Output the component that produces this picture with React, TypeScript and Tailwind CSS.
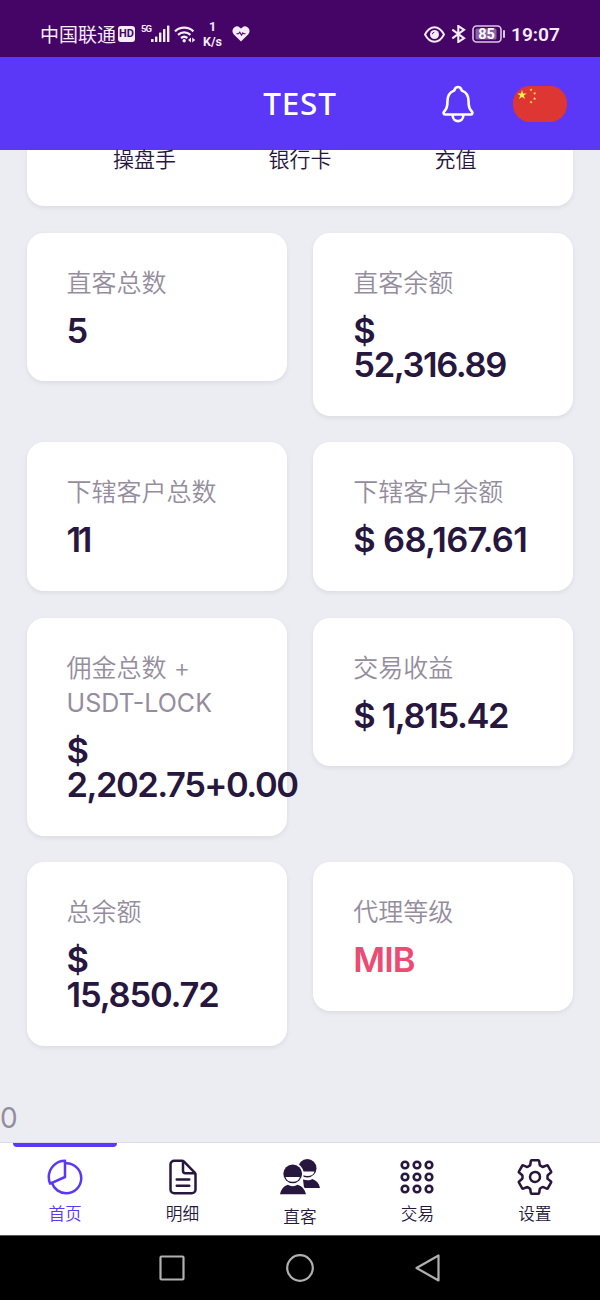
import type { ReactNode } from "react";
import {
  IoDocumentTextOutline,
  IoNotificationsOutline,
  IoPieChartOutline,
  IoSettingsOutline,
} from "react-icons/io5";
import { clsx } from "clsx";

type Stat = {
  label: string;
  latin?: string;
  value: string;
  tracking: string;
  accent?: boolean;
};

const stats: Stat[] = [
  { label: "直客总数", value: "5", tracking: "tracking-normal" },
  { label: "直客余额", value: "$\n52,316.89", tracking: "tracking-[-1.4px]" },
  { label: "下辖客户总数", value: "11", tracking: "tracking-[-3.5px]" },
  { label: "下辖客户余额", value: "$ 68,167.61", tracking: "tracking-[-0.7px]" },
  {
    label: "佣金总数 +",
    latin: "USDT-LOCK",
    value: "$\n2,202.75+0.00",
    tracking: "tracking-[-1.5px]",
  },
  { label: "交易收益", value: "$ 1,815.42", tracking: "tracking-[-1.4px]" },
  { label: "总余额", value: "$\n15,850.72", tracking: "tracking-[-1.2px]" },
  { label: "代理等级", value: "MIB", tracking: "tracking-[-1px]", accent: true },
];

function StatCard({ label, latin, value, tracking, accent }: Stat) {
  return (
    <div className="rounded-[17px] bg-white pt-[33px] pr-[26px] pb-[32.8px] pl-[40px] shadow-[0_2px_5px_rgba(0,0,0,0.07)]">
      <div className="text-[25px] leading-[35px] text-[#958d9e]">
        <p className="font-[350] whitespace-nowrap">{label}</p>
        {latin && <p>{latin}</p>}
      </div>
      <p
        className={clsx(
          "mt-[13px] text-[34.5px] leading-[34.7px] font-semibold whitespace-pre",
          tracking,
          accent ? "text-[#ec4b73]" : "text-[#27173e]",
        )}
      >
        {value}
      </p>
    </div>
  );
}

function StatusBar() {
  return (
    <div className="flex h-[57px] shrink-0 items-center bg-[#450567] pt-[11px] pr-[40px] pl-[40px] text-[#f4ecf7]">
      <span className="pt-[2px] text-[19px] leading-none">中国联通</span>
      <span className="ml-[2px] flex h-[16px] w-[17px] items-center justify-center rounded-[3px] bg-[#f4ecf7] font-[Roboto] text-[11px] font-bold text-[#450567]">
        HD
      </span>
      <span className="mb-[10px] ml-[6px] w-[10px] font-[Roboto] text-[9.5px] leading-none font-bold tracking-[-1px]">
        5G
      </span>
      <svg width="19" height="18" viewBox="0 0 19 18" className="fill-current">
        <rect x="0" y="14" width="2.6" height="3" rx="0.6" />
        <rect x="4" y="11.5" width="2.4" height="5.5" rx="0.6" />
        <rect x="8" y="7.5" width="2.4" height="9.5" rx="0.6" />
        <rect x="12" y="4" width="2.4" height="13" rx="0.6" />
        <rect x="16" y="0.5" width="2.4" height="16.5" rx="0.6" />
      </svg>
      <svg width="22" height="18" viewBox="0 0 22 18" className="ml-[4px]" fill="none" stroke="currentColor" strokeWidth="2.3">
        <path d="M1 6.3a13.5 13.5 0 0 1 18.4 0" />
        <path d="M4 9.8a9.4 9.4 0 0 1 12.4 0" />
        <path d="M7 13a5.2 5.2 0 0 1 6.4 0" />
        <circle cx="10.2" cy="15.8" r="1.7" fill="currentColor" stroke="none" />
        <path d="M17 12.5v5l-3-2.5zM18.2 12.5v5l3-2.5z" fill="currentColor" stroke="none" />
      </svg>
      <div className="ml-[5px] flex w-[23px] flex-col items-center font-[Roboto] text-[12.5px] leading-[15px] font-bold">
        <span>1</span>
        <span>K/s</span>
      </div>
      <svg width="18" height="16" viewBox="0 0 18 16" className="ml-[8px]">
        <path
          d="M9 15.5 1.9 8.4A4.6 4.6 0 0 1 1.6 2 4.7 4.7 0 0 1 8 1.7l1 .9 1-.9a4.7 4.7 0 0 1 6.4.3 4.6 4.6 0 0 1-.3 6.4z"
          fill="currentColor"
        />
        <path d="M4.5 7.8h2l1.300-1.600 1.700 3 1.300-2.300 1 .9h1.700" fill="none" stroke="#450567" strokeWidth="1.1" />
      </svg>

      <svg width="21" height="17" viewBox="0 0 21 17" className="ml-auto" fill="none" stroke="currentColor" strokeWidth="1.9">
        <path d="M1 8.5C3.5 3.7 6.7 1.2 10.5 1.2s7 2.5 9.5 7.3c-2.5 4.8-5.7 7.3-9.5 7.3S3.5 13.3 1 8.5z" />
        <circle cx="10.5" cy="8.5" r="4.5" fill="currentColor" stroke="none" />
        <path d="M8.3 8.3a2.3 2.3 0 0 1 2-2.100" stroke="#450567" strokeWidth="0.9" />
      </svg>
      <svg width="15" height="18" viewBox="0 0 15 18" className="ml-[6px]" fill="none" stroke="currentColor" strokeWidth="2.1">
        <path d="M1.3 4.7 13 13.2 7.3 17V1L13 4.8 1.3 13.3" />
      </svg>
      <svg width="34" height="18" viewBox="0 0 34 18" className="ml-[6px]">
        <rect x="1" y="1" width="28" height="16" rx="3.5" fill="none" stroke="#d9c9e2" strokeWidth="1.6" />
        <rect x="3.5" y="3.5" width="21" height="11" rx="1.5" fill="#8c62a4" />
        <rect x="31" y="5" width="2" height="8" rx="1" fill="#d9c9e2" />
        <text x="14.500" y="14" textAnchor="middle" className="fill-white font-[Roboto] text-[14.5px] font-bold">
          85
        </text>
      </svg>
      <span className="ml-[5px] pt-[1px] font-[Roboto] text-[19.2px] leading-none font-semibold">19:07</span>
    </div>
  );
}

function ChinaFlag() {
  const star = "M0-1 .225-.309.951-.309.363.118.588.809 0 .382-.588.809-.363.118-.951-.309-.225-.309z";
  return (
    <svg width="54" height="36" viewBox="0 0 54 36" className="rounded-[17px]">
      <rect width="54" height="36" fill="#dd3633" />
      <g fill="#fcf44c">
        <path d={star} transform="translate(9 9) scale(5)" />
        <path d={star} transform="translate(18 3.8) scale(1.7) rotate(20)" />
        <path d={star} transform="translate(21.6 7.4) scale(1.7) rotate(45)" />
        <path d={star} transform="translate(21.6 12.5) scale(1.7)" />
        <path d={star} transform="translate(18 16.2) scale(1.7) rotate(20)" />
      </g>
    </svg>
  );
}

function Header() {
  return (
    <header className="grid h-[93px] shrink-0 grid-cols-[1fr_auto_1fr] items-center bg-[#5b37f7] text-white">
      <span />
      <h1 className="pb-[2px] font-['Noto_Sans'] text-[31.5px] leading-none font-medium tracking-[0.8px]">
        TEST
      </h1>
      <div className="flex items-center justify-end pr-[33px]">
        <IoNotificationsOutline className="mr-[34px] size-[42px]" />
        <ChinaFlag />
      </div>
    </header>
  );
}

function PeopleIcon() {
  return (
    <svg width="40" height="36" viewBox="0 0 40 36" fill="currentColor">
      <circle cx="27.3" cy="9.3" r="9.2" />
      <path d="M20.5 12.5h14a7.2 6 0 0 1-14 0z" fill="#fff" />
      <path d="M23 20.5c4 1.3 7 1 9.500-.5 4 1.500 6.500 4.300 7.500 9H24z" />
      <circle cx="12.700" cy="14.8" r="11" fill="#fff" />
      <path d="M-.8 36c1-6 4.300-10 8.500-11 3 1.800 7 1.800 10 0 4 1 8 5 9.200 11z" stroke="#fff" strokeWidth="1.3" />
      <circle cx="12.700" cy="14.800" r="9.400" />
      <path d="M5.500 18h14.400a7.400 6.300 0 0 1-14.400 0z" fill="#fff" />
    </svg>
  );
}

function DotsIcon() {
  return (
    <svg width="40" height="40" viewBox="0 0 40 40" fill="none" stroke="currentColor" strokeWidth="2.6">
      {[8, 20, 32].map((y) =>
        [8, 20, 32].map((x) => <circle key={`${x}-${y}`} cx={x} cy={y} r="3.3" />),
      )}
    </svg>
  );
}

const tabs: { label: string; icon: ReactNode; active?: boolean; low?: boolean }[] = [
  { label: "首页", icon: <IoPieChartOutline className="size-[40px]" />, active: true },
  { label: "明细", icon: <IoDocumentTextOutline className="size-[40px]" /> },
  { label: "直客", icon: <PeopleIcon />, low: true },
  { label: "交易", icon: <DotsIcon /> },
  { label: "设置", icon: <IoSettingsOutline className="size-[40px]" /> },
];

function TabBar() {
  return (
    <nav className="grid h-[93px] shrink-0 grid-cols-5 border-t border-[#dcdce6] bg-white px-[6.4px]">
      {tabs.map((tab) => (
        <div
          key={tab.label}
          className={clsx("flex flex-col items-center", tab.active ? "text-[#5b37f7]" : "text-[#27173e]")}
        >
          <div className={clsx("h-[3.5px] w-[104px] rounded-b-[4px]", tab.active && "bg-[#5b37f7]")} />
          <div className="mt-[10.5px] flex h-[40px] items-center">{tab.icon}</div>
          <span className={clsx("text-[16.7px] leading-[24px] font-[350]", tab.low ? "mt-[8px]" : "mt-[5px]")}>
            {tab.label}
          </span>
        </div>
      ))}
    </nav>
  );
}

function SystemNav() {
  return (
    <div className="flex h-[65px] shrink-0 items-center justify-center gap-[100px] border-t border-[#555] bg-black text-[#b0b0b0]">
      <svg width="28" height="28" viewBox="0 0 28 28" fill="none" stroke="currentColor" strokeWidth="2.2">
        <rect x="2.5" y="2.5" width="23" height="23" rx="1" />
      </svg>
      <svg width="28" height="28" viewBox="0 0 28 28" fill="none" stroke="currentColor" strokeWidth="2.2">
        <circle cx="14" cy="14" r="12.8" />
      </svg>
      <svg width="28" height="28" viewBox="0 0 28 28" fill="none" stroke="currentColor" strokeWidth="2.2" strokeLinejoin="round">
        <path d="M24.5 1.5v25L2.5 14z" />
      </svg>
    </div>
  );
}

export default function App() {
  return (
    <div className="flex h-[1300px] w-[600px] flex-col overflow-hidden bg-[#ecedf3] font-[Inter,'Noto_Sans_CJK_SC',sans-serif] text-[#27173e]">
      <StatusBar />
      <Header />
      <main className="flex min-h-0 flex-1 flex-col">
        <div className="mx-[26.6px] flex h-[55.5px] shrink-0 rounded-b-[17px] bg-white px-[40px] text-[21px] leading-[20px] font-[350] shadow-[0_2px_5px_rgba(0,0,0,0.07)]">
          {["操盘手", "银行卡", "充值"].map((name) => (
            <span key={name} className="flex-1 text-center">
              {name}
            </span>
          ))}
        </div>
        <div className="mt-[27px] grid grid-cols-2 items-start gap-[26.7px] px-[26.6px]">
          {stats.map((stat) => (
            <StatCard key={stat.label} {...stat} />
          ))}
        </div>
        <p className="mt-auto pb-[5px] text-[28px] leading-[38px] text-[#958d9e]">0</p>
      </main>
      <TabBar />
      <SystemNav />
    </div>
  );
}
